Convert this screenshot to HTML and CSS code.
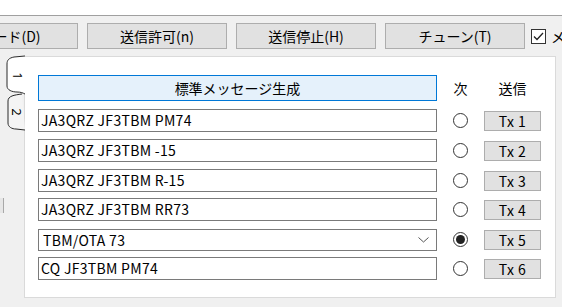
FILE: index.html
```html
<!DOCTYPE html>
<html lang="ja">
<head>
  <meta charset="UTF-8" />
  <title>WSJT-X</title>
  <link rel="stylesheet" href="styles.css">
</head>
<body>
  <div class="topstrip"></div>

  <div class="toolbar">
    <button class="tbtn first">デコード(D)</button>
    <button class="tbtn">送信許可(n)</button>
    <button class="tbtn">送信停止(H)</button>
    <button class="tbtn">チューン(T)</button>
    <label class="menu">
      <span class="check">
        <svg width="13" height="13" viewBox="0 0 13 13"><polyline points="2,6.5 5,9.5 11,3" fill="none" stroke="#222" stroke-width="1.3"/></svg>
      </span>
      メニュー
    </label>
  </div>

  <div class="main">
    <div class="tabcol">
      <svg class="tabs" width="25" height="80" viewBox="0 55 25 80">
        <path d="M22 94 C14 95 8 96 8 101 L8 123 C8 127 12 129 16 129 L25 130" fill="#f4f4f4" stroke="#2b2b2b" stroke-width="1"/>
        <path d="M25 56 L14 57 C9 58 7 60 7 64 L7 86 C7 90 12 92 17 92 C21 92 23 93 25 94" fill="#fff" stroke="#2b2b2b" stroke-width="1"/>
        <text x="13" y="76" transform="rotate(90 13 76)" text-anchor="middle" font-size="13">1</text>
        <text x="12" y="112" transform="rotate(90 12 112)" text-anchor="middle" font-size="13">2</text>
      </svg>
      <div class="stub"></div>
    </div>

    <div class="panel">
      <div class="row head">
        <button class="gen">標準メッセージ生成</button>
        <span class="colhead next">次</span>
        <span class="colhead send">送信</span>
      </div>

      <div class="row first">
        <div class="field">JA3QRZ JF3TBM PM74</div>
        <span class="radio"></span>
        <button class="tx">Tx 1</button>
      </div>
      <div class="row">
        <div class="field">JA3QRZ JF3TBM -15</div>
        <span class="radio"></span>
        <button class="tx">Tx 2</button>
      </div>
      <div class="row">
        <div class="field">JA3QRZ JF3TBM R-15</div>
        <span class="radio"></span>
        <button class="tx">Tx 3</button>
      </div>
      <div class="row tight">
        <div class="field">JA3QRZ JF3TBM RR73</div>
        <span class="radio"></span>
        <button class="tx">Tx 4</button>
      </div>
      <div class="row">
        <div class="field combo">
          <span>TBM/OTA 73</span>
          <svg width="11" height="6" viewBox="0 0 11 6"><polyline points="0.5,0.5 5.5,5 10.5,0.5" fill="none" stroke="#555" stroke-width="1"/></svg>
        </div>
        <span class="radio on"></span>
        <button class="tx">Tx 5</button>
      </div>
      <div class="row tight">
        <div class="field">CQ JF3TBM PM74</div>
        <span class="radio"></span>
        <button class="tx">Tx 6</button>
      </div>
    </div>
  </div>
</body>
</html>
```

FILE: styles.css
```css
body {
  margin: 0;
  width: 562px;
  height: 307px;
  overflow: hidden;
  background-color: #f0f0f0;
  font-family: "Noto Sans CJK JP", "Noto Sans", sans-serif;
  font-size: 14px;
  color: #000;
}
button {
  font-family: inherit;
  font-size: 14px;
  color: #000;
  padding: 0;
  box-sizing: border-box;
}
.topstrip {
  height: 15px;
  background: #fff;
  border-bottom: 1px solid #a0a0a0;
}
.toolbar {
  display: flex;
  align-items: center;
  gap: 9px;
  height: 26px;
  margin-top: 7px;
  margin-left: -72px;
  white-space: nowrap;
}
.tbtn {
  width: 140px;
  height: 26px;
  flex: none;
  background: #e1e1e1;
  border: 1px solid #adadad;
}
.tbtn.first {
  width: 150px;
}
.menu {
  display: flex;
  align-items: center;
  gap: 5px;
  margin-left: -3px;
}
.check {
  width: 15px;
  height: 15px;
  box-sizing: border-box;
  border: 1px solid #333;
  background: #fff;
  display: flex;
  align-items: center;
  justify-content: center;
}
.check svg {
  display: block;
}

.main {
  display: flex;
  margin-top: 7px;
}
.tabcol {
  width: 25px;
  margin-right: -1px;
  position: relative;
  z-index: 1;
  flex: none;
}
.tabs {
  display: block;
  margin-top: -1px;
}
.tabs text {
  font-family: "Noto Sans", sans-serif;
  fill: #000;
}
.stub {
  width: 3px;
  height: 15px;
  margin-top: 63px;
  background: #e6e6e6;
  border-right: 1px solid #a8a8a8;
}
.panel {
  width: 532px;
  height: 242px;
  box-sizing: border-box;
  background: #fff;
  border: 1px solid #dadada;
  padding: 18px 0 0 13px;
}
.row {
  display: flex;
  align-items: center;
  gap: 16px;
  height: 23px;
  margin-top: 7px;
}
.row.head {
  height: 26px;
  margin-top: 0;
}
.row.first {
  margin-top: 8px;
}
.row.tight {
  margin-top: 6px;
}
.gen {
  width: 399px;
  height: 26px;
  flex: none;
  background: #e5f1fb;
  border: 1px solid #0078d7;
}
.colhead {
  text-align: center;
  flex: none;
}
.colhead.next {
  width: 15px;
}
.colhead.send {
  width: 57px;
}
.field {
  width: 399px;
  height: 23px;
  flex: none;
  box-sizing: border-box;
  border: 1px solid #7a7a7a;
  background: #fff;
  padding-left: 2px;
  line-height: 21px;
  letter-spacing: 0.3px;
  white-space: nowrap;
}
.field.combo {
  height: 22px;
  line-height: 20px;
  padding-left: 4px;
  padding-right: 7px;
  display: flex;
  align-items: center;
  justify-content: space-between;
}
.radio {
  width: 15px;
  height: 15px;
  flex: none;
  box-sizing: border-box;
  border: 1px solid #333;
  border-radius: 50%;
  background: #fff;
  display: flex;
  align-items: center;
  justify-content: center;
}
.radio.on::after {
  content: "";
  width: 9px;
  height: 9px;
  border-radius: 50%;
  background: #222;
}
.tx {
  width: 57px;
  height: 20px;
  flex: none;
  background: #e1e1e1;
  border: 1px solid #adadad;
  font-size: 14px;
  line-height: 18px;
  letter-spacing: 0.5px;
}
```
